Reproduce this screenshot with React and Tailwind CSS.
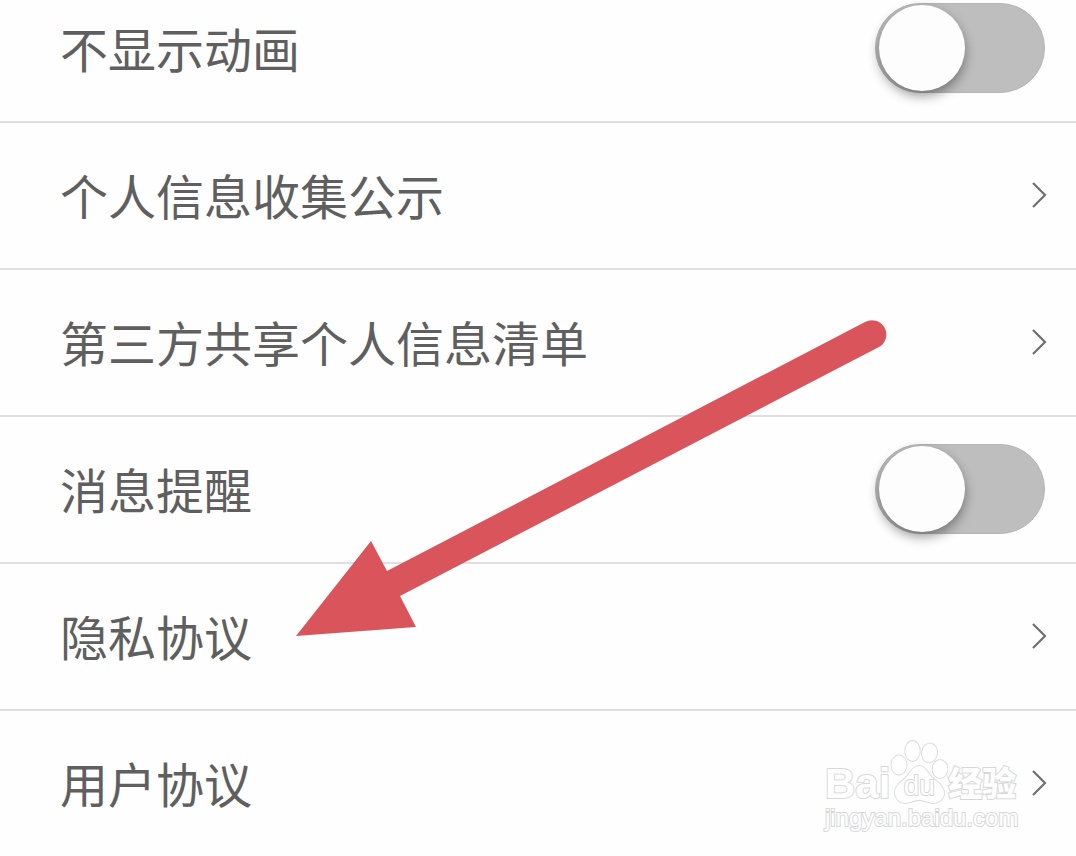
import React, { useState } from 'react';

const ROWS = [
  { id: 'animation', label: '不显示动画', type: 'toggle' },
  { id: 'collect', label: '个人信息收集公示', type: 'link' },
  { id: 'share', label: '第三方共享个人信息清单', type: 'link' },
  { id: 'notify', label: '消息提醒', type: 'toggle' },
  { id: 'privacy', label: '隐私协议', type: 'link' },
  { id: 'terms', label: '用户协议', type: 'link' },
];

function Chevron() {
  return (
    <svg className="w-4 h-7 shrink-0" viewBox="0 0 16 28" fill="none" stroke="#707070" strokeWidth={2.2} aria-hidden="true">
      <path d="M2 2L14 14L2 26" />
    </svg>
  );
}

function ToggleRow({ id, label }) {
  const [on, setOn] = useState(false);

  return (
    <div className="flex h-[145px] items-center justify-between pb-0.5 pl-[60px] pr-[31px]">
      <label htmlFor={id} className="pb-0.5">{label}</label>
      <input
        id={id}
        type="checkbox"
        checked={on}
        onChange={(e) => setOn(e.target.checked)}
        className="flex h-[90px] w-[170px] shrink-0 cursor-pointer appearance-none items-center rounded-full border border-[#b4b4b4] bg-[#bebebe] px-[3px] checked:justify-end checked:bg-emerald-500 before:size-[86px] before:rounded-full before:bg-[#fdfdfd] before:shadow-[0_5px_12px_rgba(0,0,0,0.4)] before:content-['']"
      />
    </div>
  );
}

function LinkRow({ id, label }) {
  return (
    <a href={`#${id}`} className="flex h-[145px] items-center justify-between pb-0.5 pl-[60px] pr-[29px]">
      <span className="pb-0.5">{label}</span>
      <Chevron />
    </a>
  );
}

function Watermark() {
  return (
    <div className="pointer-events-none absolute bottom-6 right-[57px] w-[194px] font-['Liberation_Sans','Noto_Sans_CJK_SC',sans-serif] text-white [paint-order:stroke_fill] [-webkit-text-stroke:2px_#d8d8d8]">
      <div className="flex h-[66px] items-end">
        <span className="text-[42px] font-bold leading-10">Bai</span>
        <div className="relative h-[66px] w-[58px] shrink-0">
          <svg className="h-full w-full" viewBox="0 -1 58 66" fill="#ffffff" stroke="#dadada" strokeWidth={1.8} aria-hidden="true">
            <ellipse cx="9" cy="26" rx="7.5" ry="9.5" />
            <ellipse cx="22.5" cy="12" rx="7.3" ry="10" />
            <ellipse cx="39.5" cy="14" rx="7.5" ry="9.5" transform="rotate(10 39.5 14)" />
            <ellipse cx="50" cy="30" rx="7.5" ry="9" />
            <path d="M29 27C34 27 37 32 40 36C43 41 54 45 54 54C54 60 49 64 43 64C38 64 35 61 29 61C23 61 20 64 15 64C9 64 5 59 5 53C5 45 15 41 18 36C21 32 24 27 29 27Z" />
          </svg>
          <span className="absolute inset-x-0 bottom-1 text-center text-[28px] leading-7">du</span>
        </div>
        <span className="whitespace-nowrap text-[34px] font-black leading-10">经验</span>
      </div>
      <div className="text-2xl leading-7">jingyan.baidu.com</div>
    </div>
  );
}

export default function App() {
  return (
    <main className="relative overflow-hidden bg-[#fefefe] font-['Noto_Sans_CJK_SC',sans-serif] text-5xl text-[#5f5f5f]">
      {/* List is scrolled a little past its first row */}
      <ul className="-mt-6 divide-y-2 divide-[#dfdfdf]">
        {ROWS.map((row) => (
          <li key={row.id}>
            {row.type === 'toggle' ? <ToggleRow {...row} /> : <LinkRow {...row} />}
          </li>
        ))}
      </ul>

      {/* Pointer to the privacy agreement */}
      <svg
        className="pointer-events-none absolute left-[295px] top-[318px] h-[320px] w-[592px]"
        viewBox="295 318 592 320"
        fill="#da555b"
        aria-hidden="true"
      >
        <path d="M296 636L371 541L387 571L865 322A14 14 0 0 1 879 347L400 596L416 627Z" />
      </svg>

      <Watermark />
    </main>
  );
}
